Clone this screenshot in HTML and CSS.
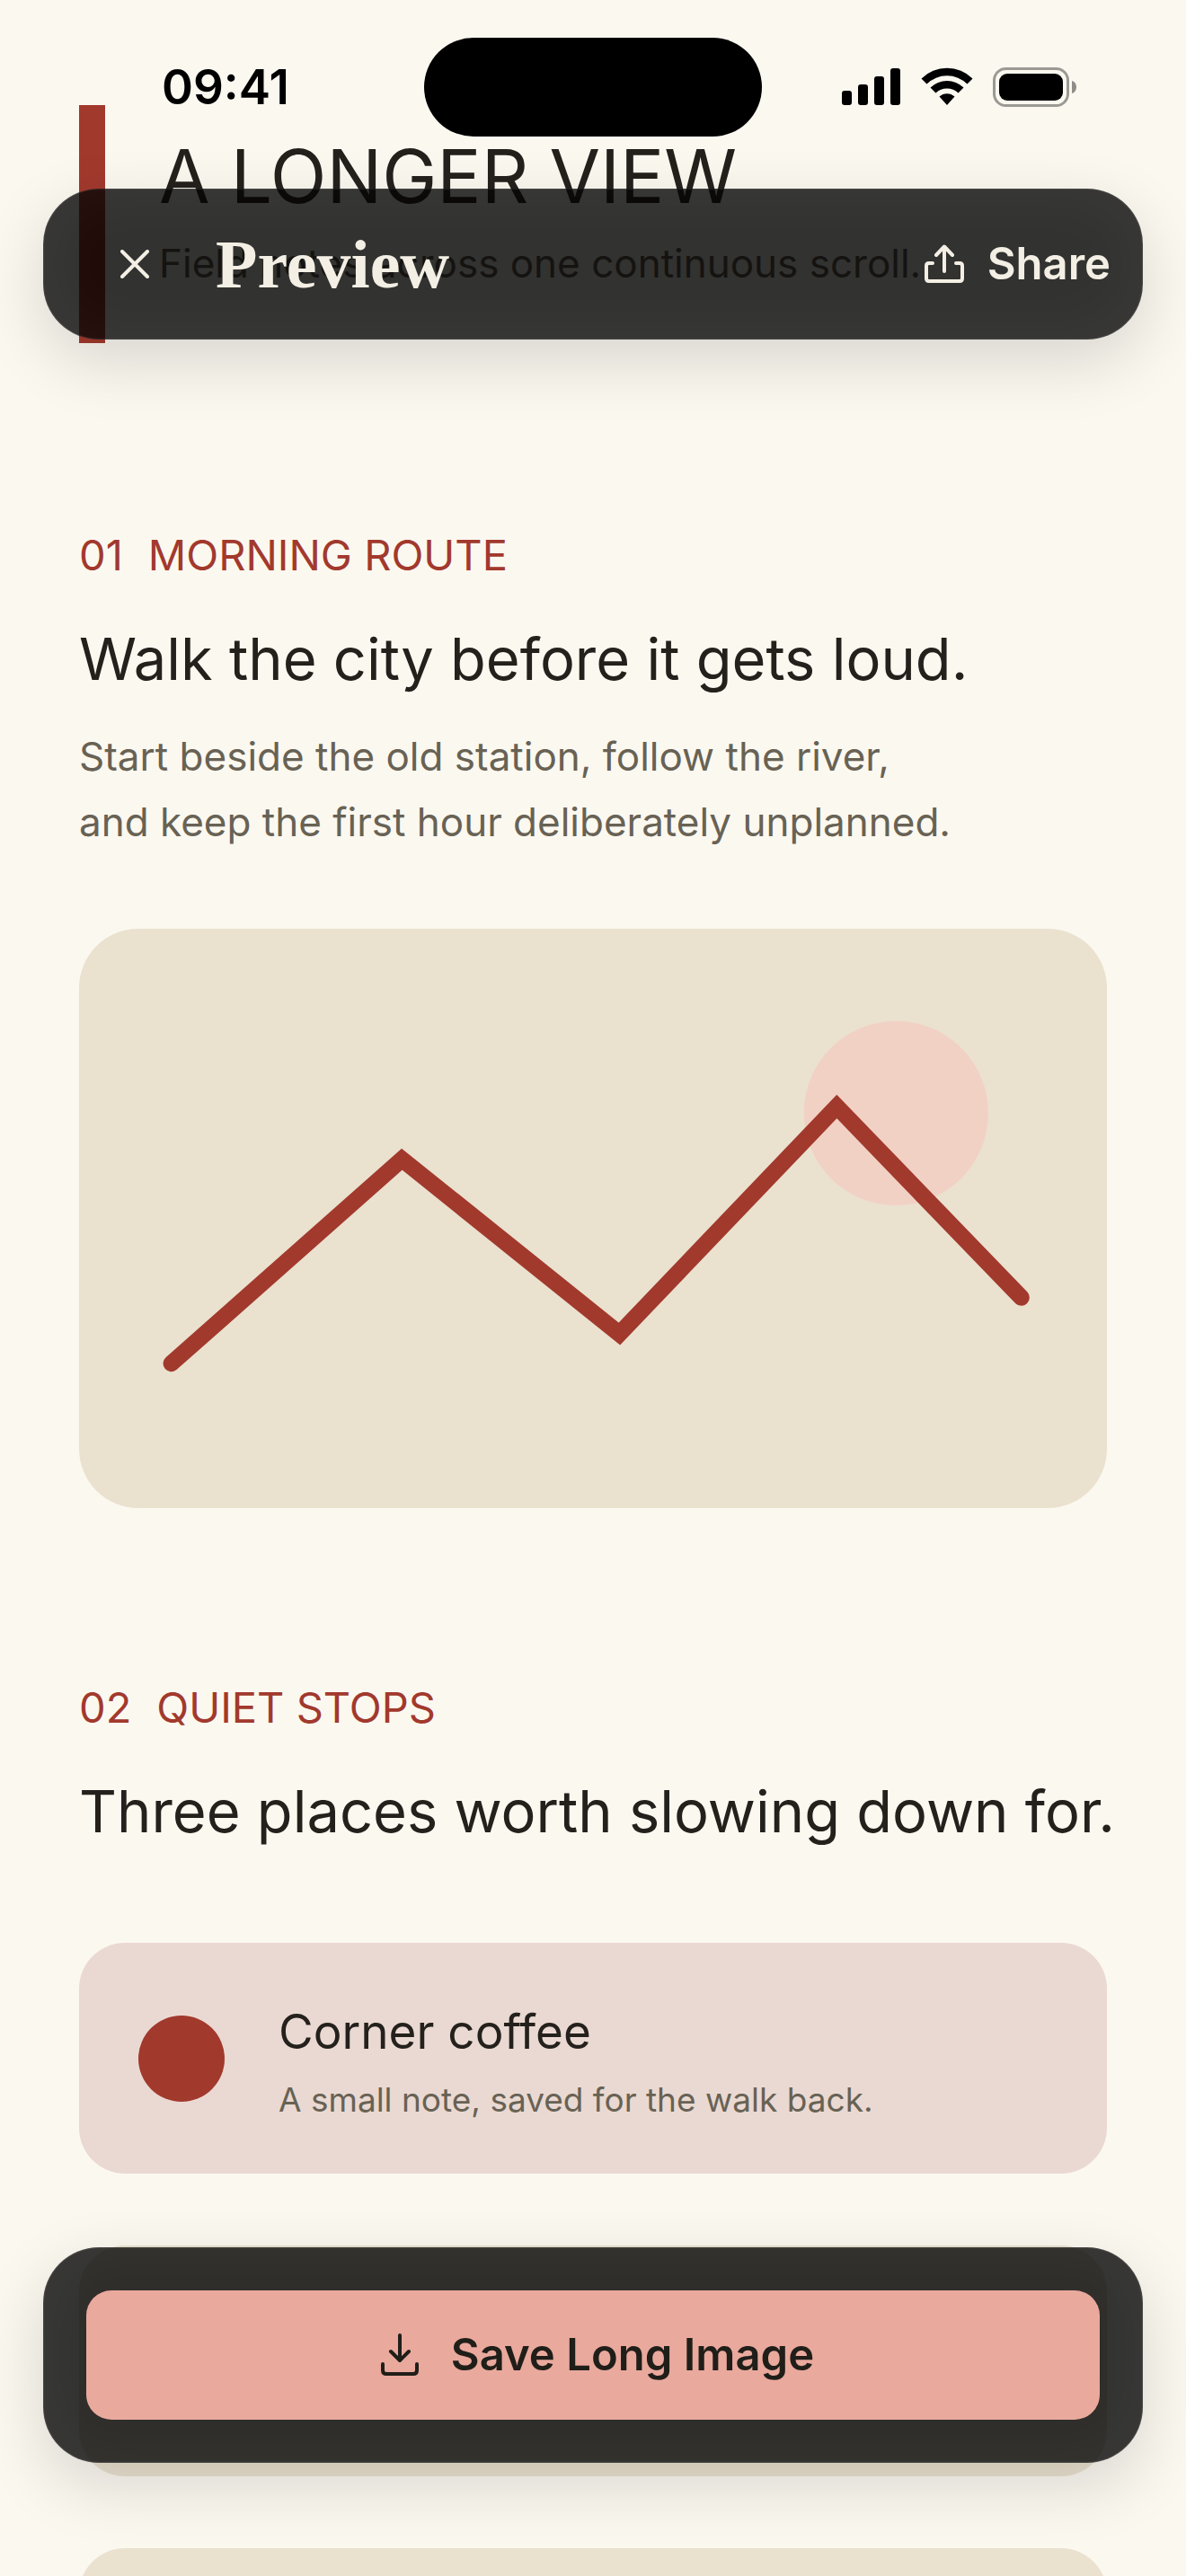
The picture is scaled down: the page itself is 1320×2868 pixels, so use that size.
FILE: index.html
```html
<!DOCTYPE html>
<html lang="en">
<head>
    <meta charset="UTF-8">
    <meta name="viewport" content="width=device-width, initial-scale=1.0">
    <title>Preview</title>
    <link rel="stylesheet" href="styles.css">
</head>
<body>
    <!-- Status bar -->
    <div class="status-bar">
        <div class="status-time">09:41</div>
        <div class="island"></div>
        <div class="status-icons">
            <svg class="icon-signal" viewBox="0 0 66 42" aria-hidden="true">
                <rect x="0" y="26" width="11" height="16" rx="3"/>
                <rect x="18" y="19" width="11" height="23" rx="3"/>
                <rect x="36" y="10" width="11" height="32" rx="3"/>
                <rect x="54" y="1" width="11" height="41" rx="3"/>
            </svg>
            <svg class="icon-wifi" viewBox="0 0 58 42" aria-hidden="true">
                <path d="M0.500 12.500 A40.500 40.500 0 0 1 57.500 12.500 L51.500 18.500 A32 32 0 0 0 6.500 18.500 Z"/>
                <path d="M10.500 22.500 A26.500 26.500 0 0 1 47.500 22.500 L41.500 28.500 A18 18 0 0 0 16.500 28.500 Z"/>
                <path d="M20.500 32.500 A12.500 12.500 0 0 1 37.500 32.500 L29 42 Z"/>
            </svg>
            <svg class="icon-battery" viewBox="0 0 94 44" aria-hidden="true">
                <rect class="battery-shell" x="1.500" y="1.500" width="82" height="41" rx="13"/>
                <rect x="7" y="7" width="71" height="30" rx="9"/>
                <path class="battery-cap" d="M88 15 C91.500 16 93 19 93 22 C93 25 91.500 28 88 29 Z"/>
            </svg>
        </div>
    </div>

    <!-- Top toolbar -->
    <header class="glass toolbar">
        <button class="close-btn" type="button" aria-label="Close">
            <svg class="icon-close" viewBox="0 0 32 32" aria-hidden="true">
                <path d="M2 2 L30 30 M30 2 L2 30"/>
            </svg>
        </button>
        <div class="toolbar-title">Preview</div>
        <button class="share-btn" type="button">
            <svg class="icon-share" viewBox="0 0 44 44" aria-hidden="true">
                <path d="M22 30 V3 M13 12 L22 2.500 L31 12 M9 21 H5 Q2 21 2 24 V38 Q2 41 5 41 H39 Q42 41 42 38 V24 Q42 21 39 21 H35"/>
            </svg>
            Share
        </button>
    </header>

    <!-- Long image -->
    <main class="page">
        <div class="hero">
            <h1>A LONGER VIEW</h1>
            <p>Field notes across one continuous scroll.</p>
        </div>

        <section class="route">
            <div class="label"><span>01</span> <span>MORNING ROUTE</span></div>
            <h2>Walk the city before it gets loud.</h2>
            <p>Start beside the old station, follow the river,<br>and keep the first hour deliberately unplanned.</p>
            <svg class="route-map" viewBox="0 0 624 352" aria-hidden="true">
                <circle class="route-sun" cx="496" cy="112" r="56"/>
                <polyline class="route-line" points="56,264 196,140 328,246 460,108 572,224"/>
            </svg>
        </section>

        <section class="stops">
            <div class="label"><span>02</span> <span>QUIET STOPS</span></div>
            <h2>Three places worth slowing down for.</h2>
            <div class="cards">
                <div class="card card-pink">
                    <div class="dot"></div>
                    <div class="card-text">
                        <h3>Corner coffee</h3>
                        <p>A small note, saved for the walk back.</p>
                    </div>
                </div>
                <div class="card"></div>
                <div class="card"></div>
            </div>
        </section>
    </main>

    <!-- Bottom action -->
    <footer class="glass actions">
        <button class="save-btn" type="button">
            <svg class="icon-save" viewBox="0 0 42 48" aria-hidden="true">
                <path d="M21 2 V29 M11 20 L21 30 L31 20 M2 34 V41 Q2 45 6 45 H36 Q40 45 40 41 V34"/>
            </svg>
            Save Long Image
        </button>
    </footer>
</body>
</html>
```

FILE: styles.css
```css
* {
    box-sizing: border-box;
}
html, body {
    height: 100%;
}
body {
    margin: 0;
    overflow: hidden;
    background: #fbf8f0;
    color: #24211d;
    font-family: Inter, "Liberation Sans", Arial, sans-serif;
}
h1, h2, h3, p {
    margin: 0;
    font-weight: 400;
}
button {
    border: none;
    padding: 0;
    background: none;
    color: inherit;
    font: inherit;
    cursor: pointer;
}
svg {
    display: block;
}

/* Status bar */
.status-bar {
    position: fixed;
    top: 0;
    left: 0;
    right: 0;
    z-index: 3;
    display: grid;
    grid-template-columns: 1fr 376px 1fr;
    align-items: center;
    padding-top: 42px;
    color: #000;
}
.status-time {
    padding-left: 180px;
    font-size: 53px;
    line-height: 64px;
    font-weight: 600;
}
.island {
    height: 110px;
    border-radius: 55px;
    background: #000;
}
.status-icons {
    display: flex;
    justify-content: flex-end;
    gap: 22px;
    padding-right: 121px;
}
.icon-signal {
    width: 66px;
    height: 42px;
}
.icon-wifi {
    width: 58px;
    height: 42px;
}
.icon-battery {
    width: 94px;
    height: 44px;
}
.battery-shell {
    fill: none;
    stroke: #9b9993;
    stroke-width: 3;
}
.battery-cap {
    fill: #8f8d88;
}

/* Floating panels */
.glass {
    position: fixed;
    left: 48px;
    right: 48px;
    z-index: 2;
    display: flex;
    align-items: center;
    border-radius: 62px;
    background: rgba(0, 0, 0, 0.8);
    box-shadow: 0 24px 72px rgba(0, 0, 0, 0.14),
        inset 0 0 72px rgba(255, 255, 255, 0.04),
        inset 0 0 2px rgba(255, 255, 255, 0.3);
}
.toolbar {
    top: 210px;
    height: 168px;
    padding: 0 36px 0 54px;
    color: #f4efe4;
}
.close-btn {
    display: flex;
    align-items: center;
    justify-content: center;
    width: 96px;
    height: 96px;
}
.toolbar svg,
.icon-save {
    fill: none;
    stroke: currentColor;
    stroke-width: 4;
    stroke-linecap: round;
    stroke-linejoin: round;
}
.icon-close {
    width: 32px;
    height: 32px;
}
.toolbar-title {
    flex: 1;
    padding-left: 42px;
    font-family: "Liberation Serif", "Times New Roman", serif;
    font-size: 76px;
    line-height: 84px;
    font-weight: 700;
}
.share-btn {
    display: flex;
    align-items: center;
    gap: 26px;
    font-size: 49px;
    line-height: 60px;
    font-weight: 600;
}
.icon-share {
    width: 44px;
    height: 44px;
}
.actions {
    bottom: 126px;
    padding: 48px;
}
.save-btn {
    flex: 1;
    display: flex;
    align-items: center;
    justify-content: center;
    gap: 36px;
    height: 144px;
    padding-left: 10px;
    border-radius: 28px;
    background: #eaa99d;
    color: #201e19;
    font-size: 49px;
    line-height: 60px;
    font-weight: 600;
}
.icon-save {
    width: 42px;
    height: 48px;
}

/* Long image */
.page {
    padding: 117px 88px 0;
}
.hero {
    border-left: 29px solid #a2392d;
    padding: 28px 0 59px 60px;
}
.hero h1 {
    font-size: 82px;
    line-height: 104px;
}
.hero p {
    margin-top: 14px;
    color: #686254;
    font-size: 44px;
    line-height: 60px;
    white-space: nowrap;
}
.route {
    margin-top: 206px;
}
.stops {
    margin-top: 192px;
}
.label {
    display: flex;
    gap: 28px;
    color: #a2392d;
    font-size: 47px;
    line-height: 60px;
}
h2 {
    margin-top: 42px;
    font-size: 65px;
    line-height: 88px;
    white-space: nowrap;
}
.route p {
    margin-top: 28px;
    color: #686254;
    font-size: 44px;
    line-height: 73px;
}
.route-map {
    width: 100%;
    height: auto;
    margin-top: 82px;
    border-radius: 66px;
    background: #eae1cf;
}
.route-sun {
    fill: #f2d1c5;
}
.route-line {
    fill: none;
    stroke: #a2392d;
    stroke-width: 10;
    stroke-linecap: round;
}
.cards {
    display: flex;
    flex-direction: column;
    gap: 80px;
    margin-top: 102px;
}
.card {
    display: flex;
    align-items: center;
    gap: 60px;
    min-height: 257px;
    padding: 0 66px;
    border-radius: 51px;
    background: #eae1cf;
}
.card-pink {
    background: #ead9d2;
}
.dot {
    width: 96px;
    height: 96px;
    border-radius: 50%;
    background: #a2392d;
}
.card-text {
    padding-top: 6px;
}
.card h3 {
    font-size: 53px;
    line-height: 64px;
}
.card p {
    margin-top: 22px;
    color: #686254;
    font-size: 37px;
    line-height: 44px;
}
```
